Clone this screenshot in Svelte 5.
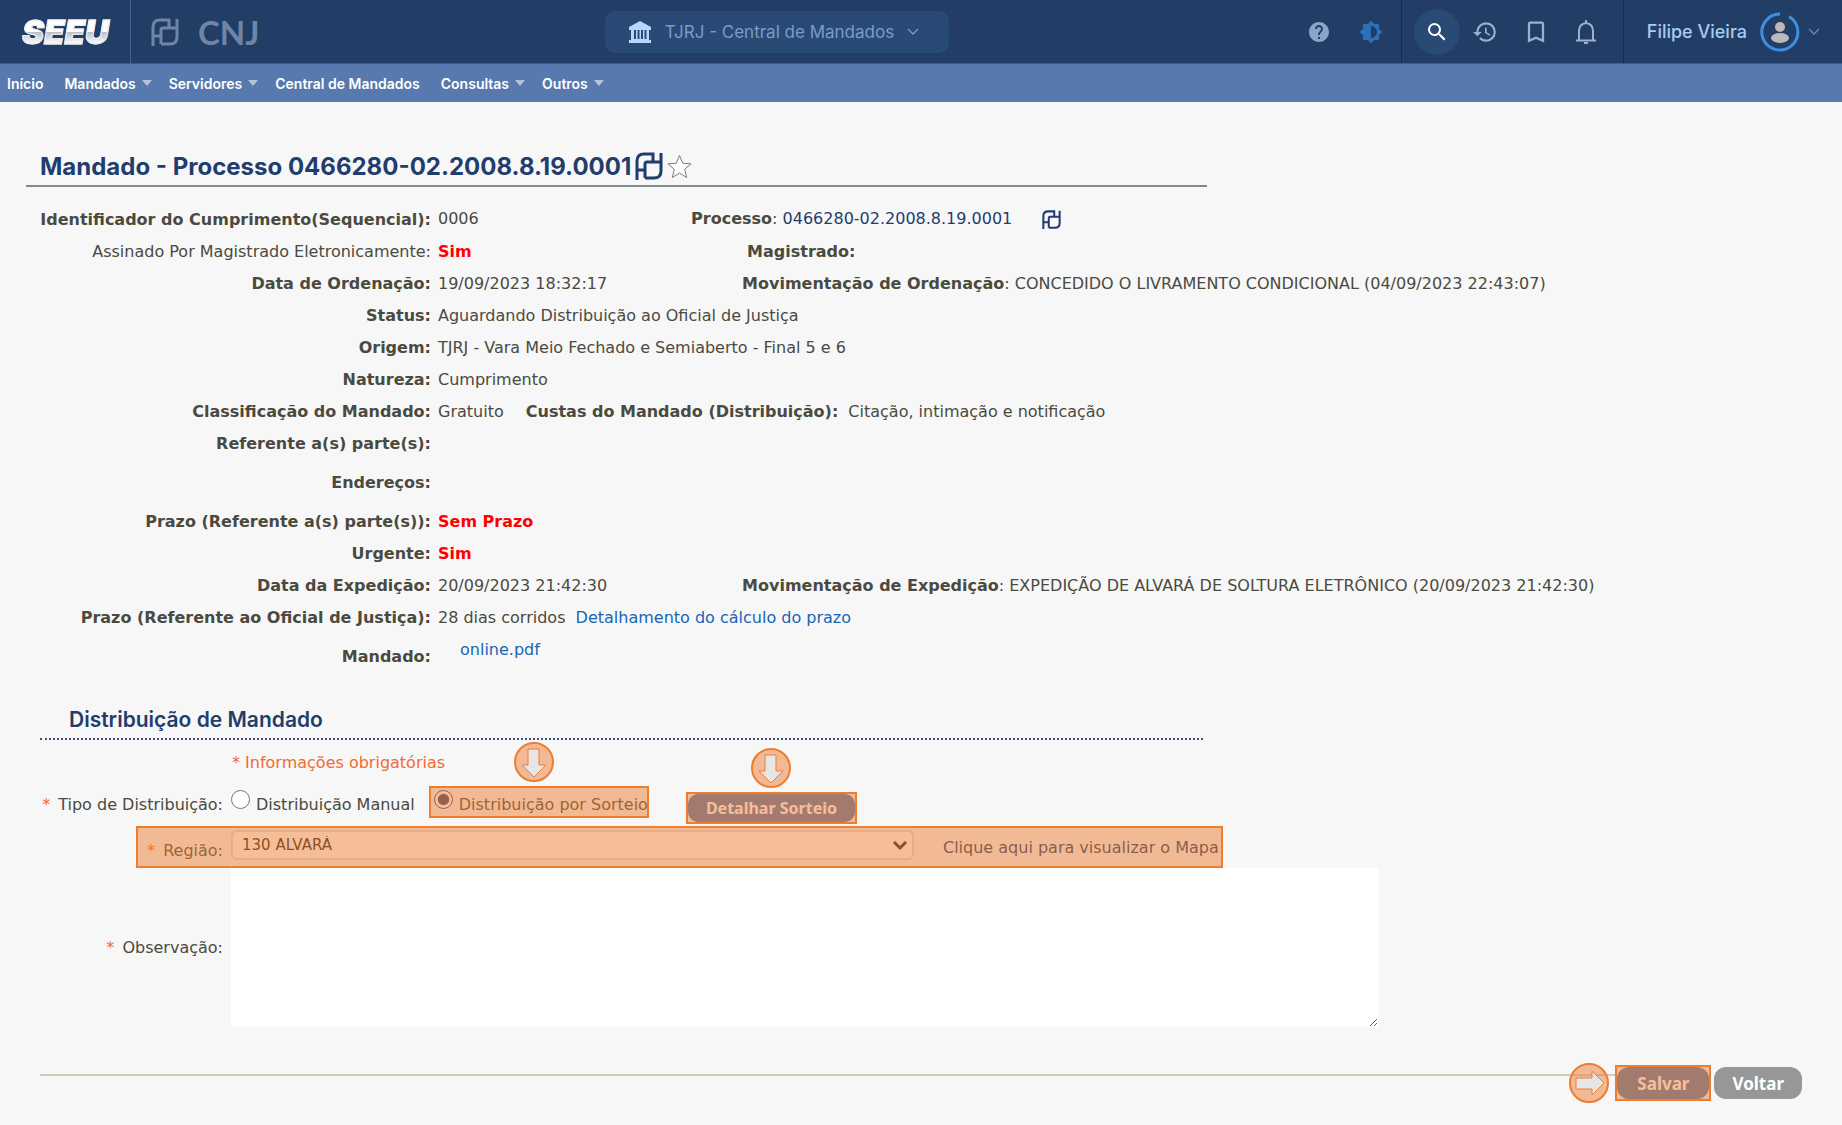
<script lang="ts">
	interface MenuItem {
		label: string;
		hasMenu?: boolean;
	}

	interface Detail {
		label: string;
		value?: string;
		light?: boolean;
		alert?: boolean;
		tall?: boolean;
	}

	const menu: MenuItem[] = [
		{ label: 'Início' },
		{ label: 'Mandados', hasMenu: true },
		{ label: 'Servidores', hasMenu: true },
		{ label: 'Central de Mandados' },
		{ label: 'Consultas', hasMenu: true },
		{ label: 'Outros', hasMenu: true }
	];

	const processo = '0466280-02.2008.8.19.0001';

	const details: Detail[] = [
		{ label: 'Identificador do Cumprimento(Sequencial):', value: '0006' },
		{ label: 'Assinado Por Magistrado Eletronicamente:', value: 'Sim', light: true, alert: true },
		{ label: 'Data de Ordenação:', value: '19/09/2023 18:32:17' },
		{ label: 'Status:', value: 'Aguardando Distribuição ao Oficial de Justiça' },
		{ label: 'Origem:', value: 'TJRJ - Vara Meio Fechado e Semiaberto - Final 5 e 6' },
		{ label: 'Natureza:', value: 'Cumprimento' },
		{ label: 'Classificação do Mandado:', value: 'Gratuito' },
		{ label: 'Referente a(s) parte(s):' },
		{ label: 'Endereços:', tall: true },
		{ label: 'Prazo (Referente a(s) parte(s)):', value: 'Sem Prazo', alert: true },
		{ label: 'Urgente:', value: 'Sim', alert: true },
		{ label: 'Data da Expedição:', value: '20/09/2023 21:42:30' },
		{ label: 'Prazo (Referente ao Oficial de Justiça):', value: '28 dias corridos' },
		{ label: 'Mandado:', tall: true }
	];

	let tipo = $state('sorteio');
	let regiao = $state('130');
	let observacao = $state('');
</script>

{#snippet pdpj(size: number)}
	<svg width={size} height={size} viewBox="0 0 28 28" fill="none" stroke="currentColor" stroke-width="3" aria-hidden="true">
		<path d="M2 28V9Q2 2 9 2H18V10M2 18H10M10 26V12Q10 10 12 10H26M10 26H19Q26 26 26 19V1" />
	</svg>
{/snippet}

{#snippet chevron()}
	<svg class="chevron" width="12" height="8" viewBox="0 0 12 8" fill="none" stroke="currentColor" stroke-width="1.3" aria-hidden="true">
		<path d="M1 1l5 5 5-5" />
	</svg>
{/snippet}

{#snippet arrow(right: boolean)}
	<svg width="40" height="40" viewBox="0 0 40 40" aria-hidden="true">
		<circle cx="20" cy="20" r="19" fill="#ed7d31" fill-opacity="0.5" stroke="#ed7d31" stroke-width="2" />
		<path
			d="M14 7H25V23H32L20 35 8 23H14Z"
			fill="#e7e6e6"
			stroke="#ed7d31"
			transform={right ? 'rotate(-90 20 20)' : undefined}
		/>
	</svg>
{/snippet}

<header class="topbar">
	<a class="logo" href="#inicio"><span>SEEU</span></a>
	<div class="partners">
		{@render pdpj(28)}
		<span class="cnj">CNJ</span>
	</div>

	<button type="button" class="unit">
		<svg width="24" height="24" viewBox="0 0 24 24" fill="#b5d8fa" aria-hidden="true">
			<path d="M12 1L1 7v3h2v10H1v3h22v-3h-2V10h2V7zM6 10h2v9H6zm3.500 0h2v9h-2zm3.500 0h2v9h-2zm3.500 0h2v9h-2z" fill-rule="evenodd" />
		</svg>
		<span>TJRJ - Central de Mandados</span>
		{@render chevron()}
	</button>

	<div class="tools">
		<button type="button" class="tool help" aria-label="Ajuda">
			<svg width="24" height="24" viewBox="0 0 24 24" fill="currentColor" aria-hidden="true">
				<path d="M12 2C6.480 2 2 6.480 2 12s4.480 10 10 10 10-4.480 10-10S17.520 2 12 2zm1 17h-2v-2h2v2zm2.070-7.750l-.9.920C13.450 12.900 13 13.500 13 15h-2v-.5c0-1.100.450-2.100 1.170-2.830l1.240-1.260c.370-.360.590-.860.590-1.410 0-1.100-.9-2-2-2s-2 .9-2 2H8c0-2.210 1.790-4 4-4s4 1.790 4 4c0 .880-.360 1.680-.930 2.250z" />
			</svg>
		</button>
		<button type="button" class="tool contrast" aria-label="Contraste">
			<svg width="24" height="24" viewBox="0 0 24 24" fill="currentColor" aria-hidden="true">
				<path d="M20 8.690V4h-4.690L12 .690 8.690 4H4v4.690L.690 12 4 15.310V20h4.690L12 23.310 15.310 20H20v-4.690L23.310 12 20 8.690zM12 18V6c3.310 0 6 2.690 6 6s-2.690 6-6 6z" />
			</svg>
		</button>
	</div>

	<div class="tools shortcuts">
		<button type="button" class="tool search" aria-label="Pesquisar">
			<svg width="24" height="24" viewBox="0 0 24 24" fill="currentColor" aria-hidden="true">
				<path d="M15.500 14h-.790l-.280-.270A6.470 6.470 0 0 0 16 9.500 6.500 6.500 0 1 0 9.500 16c1.610 0 3.090-.590 4.230-1.570l.270.280v.790l5 4.990L20.490 19l-4.990-5zm-6 0C7.010 14 5 11.990 5 9.500S7.010 5 9.500 5 14 7.010 14 9.500 11.990 14 9.500 14z" />
			</svg>
		</button>
		<button type="button" class="tool" aria-label="Histórico">
			<svg width="26" height="26" viewBox="0 0 24 24" fill="currentColor" aria-hidden="true">
				<path d="M13 3a9 9 0 0 0-9 9H1l3.890 3.890.070.140L9 12H6c0-3.870 3.130-7 7-7s7 3.130 7 7-3.130 7-7 7c-1.930 0-3.680-.790-4.940-2.060l-1.420 1.420A8.954 8.954 0 0 0 13 21a9 9 0 0 0 0-18zm-1 5v5l4.280 2.540.720-1.210-3.500-2.080V8H12z" />
			</svg>
		</button>
		<button type="button" class="tool" aria-label="Favoritos">
			<svg width="28" height="28" viewBox="0 0 24 24" fill="currentColor" aria-hidden="true">
				<path d="M17 3H7c-1.100 0-2 .9-2 2v16l7-3 7 3V5c0-1.100-.9-2-2-2zm0 15l-5-2.180L7 18V5h10v13z" />
			</svg>
		</button>
		<button type="button" class="tool" aria-label="Notificações">
			<svg width="24" height="26" viewBox="0 0 24 26" fill="none" stroke="currentColor" stroke-width="2" aria-hidden="true">
				<path d="M5 21V12Q5 5 12 4Q19 5 19 12V21M2 21.500H22M12 1V4" />
				<path d="M10 24h4" />
			</svg>
		</button>
	</div>

	<button type="button" class="user">
		<span>Filipe Vieira</span>
		<svg width="40" height="40" viewBox="0 0 40 40" aria-hidden="true">
			<path d="M20 2A18 18 0 1 0 29 4.500" fill="none" stroke="#3f8fe0" stroke-width="3" />
			<circle cx="20" cy="15" r="5" fill="#bdb9b6" />
			<ellipse cx="20" cy="26" rx="9" ry="5" fill="#bdb9b6" />
		</svg>
		{@render chevron()}
	</button>
</header>

<nav class="menu">
	{#each menu as item}
		<a href="#menu" class:has-menu={item.hasMenu}>{item.label}</a>
	{/each}
</nav>

<main>
	<h1>
		Mandado - Processo {processo}
		{@render pdpj(28)}
		<svg width="25" height="25" viewBox="0 0 25 25" fill="#fff" stroke="#7d7d74" stroke-linejoin="round" aria-hidden="true">
			<path d="M12.500 1.500l3.200 7.700 8.300.700-6.300 5.400 2 8.200-7.200-4.400-7.200 4.400 2-8.200L1 9.900l8.300-.700z" />
		</svg>
	</h1>

	<table class="details">
		<tbody>
			{#each details as row}
				<tr class:tall={row.tall}>
					<th scope="row" class:light={row.light}>{row.label}</th>
					<td class:alert={row.alert}>
						{#if row.value}<span class="value">{row.value}</span>{/if}
						{#if row.label.startsWith('Identificador')}
							<span class="extra processo"><b>Processo</b>: <a href="#processo">{processo}</a>{@render pdpj(19)}</span>
						{:else if row.label.startsWith('Assinado')}
							<span class="extra magistrado"><b>Magistrado:</b></span>
						{:else if row.label === 'Data de Ordenação:'}
							<span class="extra"><b>Movimentação de Ordenação</b>: CONCEDIDO O LIVRAMENTO CONDICIONAL (04/09/2023 22:43:07)</span>
						{:else if row.label.startsWith('Classificação')}
							<b class="custas">Custas do Mandado (Distribuição):</b>Citação, intimação e notificação
						{:else if row.label === 'Data da Expedição:'}
							<span class="extra"><b>Movimentação de Expedição</b>: EXPEDIÇÃO DE ALVARÁ DE SOLTURA ELETRÔNICO (20/09/2023 21:42:30)</span>
						{:else if row.value === '28 dias corridos'}
							<a class="link calculo" href="#prazo">Detalhamento do cálculo do prazo</a>
						{:else if row.label === 'Mandado:'}
							<a class="link arquivo" href="#pdf">online.pdf</a>
						{/if}
					</td>
				</tr>
			{/each}
		</tbody>
	</table>

	<h2>Distribuição de Mandado</h2>

	<form onsubmit={(e) => e.preventDefault()}>
		<p class="required-note">* Informações obrigatórias</p>

		<div class="row tipo" role="radiogroup" aria-labelledby="tipo-label">
			<span class="label" id="tipo-label"><i>*</i> Tipo de Distribuição:</span>
			<div class="field">
				<label class="option"><input type="radio" name="tipo" value="manual" bind:group={tipo} /> Distribuição Manual</label>
				<label class="option highlight">
					<input type="radio" name="tipo" value="sorteio" bind:group={tipo} /> Distribuição por Sorteio
					<span class="pointer">{@render arrow(false)}</span>
				</label>
				<div class="highlight detalhar">
					<button type="button" class="btn">Detalhar Sorteio</button>
					<span class="pointer">{@render arrow(false)}</span>
				</div>
			</div>
		</div>

		<div class="row regiao highlight">
			<label class="label" for="regiao"><i>*</i> Região:</label>
			<div class="field">
				<div class="select">
					<select id="regiao" bind:value={regiao}>
						<option value="130">130 ALVARÁ</option>
					</select>
					<svg width="14" height="10" viewBox="0 0 14 10" fill="none" stroke="#222" stroke-width="3" aria-hidden="true">
						<path d="M1 1l6 6 6-6" />
					</svg>
				</div>
				<a class="mapa" href="#mapa">Clique aqui para visualizar o Mapa</a>
			</div>
		</div>

		<div class="row observacao">
			<label class="label" for="observacao"><i>*</i> Observação:</label>
			<textarea id="observacao" bind:value={observacao}></textarea>
		</div>

		<div class="actions">
			<hr />
			<div class="highlight salvar">
				<button type="submit" class="btn">Salvar</button>
				<span class="pointer left">{@render arrow(true)}</span>
			</div>
			<button type="button" class="btn secondary">Voltar</button>
		</div>
	</form>
</main>

<style>
	:global(body) {
		background: #f7f7f7;
		color: #4a4a40;
		font-family: 'DejaVu Sans', Verdana, sans-serif;
		font-size: 16px;
	}

	a {
		color: inherit;
		text-decoration: none;
	}

	button {
		font-family: inherit;
		border: 0;
		cursor: pointer;
	}

	svg {
		flex-shrink: 0;
	}

	.topbar {
		display: flex;
		align-items: center;
		height: 63px;
		background: #223d66;
		border-bottom: 1px solid #3c5a8a;
		font-family: Inter, sans-serif;
	}

	.logo {
		display: flex;
		align-items: center;
		align-self: stretch;
		box-sizing: border-box;
		width: 131px;
		padding-left: 20px;
		border-right: 1px solid #4a6288;
	}

	.logo span {
		padding: 0 4px 0 2px;
		background: linear-gradient(#fff 50%, #b9c0ca 51%, #f4f4f4 75%);
		background-clip: text;
		color: transparent;
		font: italic 900 33px Inter, sans-serif;
		-webkit-text-stroke: 1px #eee;
	}

	.partners {
		display: flex;
		align-items: center;
		gap: 19px;
		flex: 1;
		padding: 0 20px;
		color: #7085a5;
	}

	.cnj {
		font: bold 33px/36px Lato, sans-serif;
	}

	.unit {
		display: flex;
		align-items: center;
		gap: 13px;
		height: 42px;
		padding: 0 30px 0 23px;
		border-radius: 10px;
		background: #294a75;
		color: #7b9cc7;
		font-size: 17px;
	}

	.tools {
		display: flex;
		align-items: center;
		justify-content: flex-end;
		gap: 28px;
		flex: 1;
		align-self: stretch;
		padding-right: 18px;
		border-right: 1px solid #182c4c;
	}

	.tools.shortcuts {
		flex: none;
		gap: 24px;
		padding: 0 25px 0 12px;
	}

	.tool {
		display: flex;
		padding: 0;
		background: none;
		color: #9fb0cc;
	}

	.help {
		color: #8aa5c8;
	}

	.contrast {
		color: #2e70b8;
	}

	.search {
		align-items: center;
		justify-content: center;
		width: 46px;
		height: 46px;
		margin-right: -12px;
		border-radius: 50%;
		background: #294a75;
		color: #fff;
	}

	.user {
		display: flex;
		align-items: center;
		padding: 0 22px 0 23px;
		background: none;
		color: #a9cbf0;
		font-size: 18px;
		font-weight: 500;
	}

	.user > svg {
		margin-left: 13px;
	}

	.user .chevron,
	.user :global(.chevron) {
		margin-left: 8px;
		color: #6f89af;
	}

	.menu {
		display: flex;
		align-items: center;
		gap: 21px;
		height: 38px;
		padding-left: 7px;
		background: #5879ad;
		color: #fff;
		font: 600 14px Inter, sans-serif;
	}

	.has-menu::after {
		content: '';
		display: inline-block;
		margin: 0 -4px 3px 6px;
		border: 5px solid transparent;
		border-top: 6px solid #b4c3dc;
		border-bottom: 0;
	}

	main {
		padding: 45px 40px 24px;
	}

	h1 {
		display: flex;
		align-items: center;
		gap: 4px;
		box-sizing: border-box;
		width: 67%;
		height: 40px;
		margin: 0 0 16px -14px;
		padding-left: 14px;
		border-bottom: 2px solid #7b8b8f;
		color: #1f3d6d;
		font: 700 24px Inter, sans-serif;
		white-space: nowrap;
	}

	.details {
		border-collapse: collapse;
	}

	.details tr {
		height: 32px;
	}

	.details .tall {
		height: 46px;
	}

	.details th,
	.details td {
		padding: 0;
		white-space: nowrap;
	}

	.details th {
		width: 391px;
		text-align: right;
	}

	.details .light {
		font-weight: normal;
	}

	.details td {
		padding-left: 7px;
	}

	.value {
		display: inline-block;
	}

	.alert .value {
		color: #f00;
		font-weight: bold;
	}

	td:has(.extra) .value {
		width: 299px;
	}

	td:has(.processo) .value {
		width: 248px;
	}

	.magistrado {
		padding-left: 5px;
	}

	.processo a,
	.processo svg {
		color: #1f3d6d;
	}

	.processo svg {
		margin-left: 30px;
		vertical-align: middle;
	}

	.custas {
		margin: 0 10px 0 17px;
	}

	.link {
		color: #1765b5;
	}

	.calculo {
		margin-left: 5px;
	}

	.details .tall td {
		padding-bottom: 14px;
	}

	.arquivo {
		margin-left: 22px;
	}

	h2 {
		width: 1134px;
		margin: 29px 0 0;
		padding: 0 0 6px 29px;
		border-bottom: 2px dotted #3d5580;
		color: #1f3d6d;
		font: 600 21px/24px Inter, sans-serif;
	}

	.required-note {
		margin: 0;
		padding: 13px 0 0 192px;
		color: #f26a30;
		line-height: 20px;
	}

	.row {
		display: flex;
		align-items: center;
		gap: 8px;
	}

	.label {
		width: 183px;
		text-align: right;
		white-space: nowrap;
	}

	.label i {
		margin-right: 3px;
		color: #f26a30;
		font-style: normal;
	}

	.field {
		display: flex;
		align-items: center;
	}

	.tipo {
		padding: 13px 0 2px;
		line-height: 38px;
	}

	.tipo .field {
		align-items: flex-start;
	}

	.option {
		display: flex;
		align-items: flex-start;
		gap: 6px;
		height: 32px;
		white-space: nowrap;
	}

	.option input {
		width: 19px;
		height: 19px;
		margin: 4px 0 0;
		accent-color: #446;
	}

	.highlight {
		position: relative;
	}

	.highlight::after {
		content: '';
		position: absolute;
		inset: 0;
		border: 2px solid #ed7d31;
		background: #ed7d3180;
		pointer-events: none;
	}

	.option.highlight {
		margin-left: 14px;
		padding: 0 1px 0 5px;
	}

	.pointer {
		position: absolute;
		left: 50%;
		bottom: 100%;
		display: flex;
		margin: 0 0 4px -20px;
	}

	.option .pointer {
		left: 48%;
	}

	.pointer.left {
		right: 100%;
		bottom: auto;
		left: auto;
		margin: 0 6px 0 0;
	}

	.detalhar {
		margin: 6px 0 0 37px;
	}

	.highlight.detalhar,
	.highlight.salvar {
		display: flex;
		align-items: center;
		padding: 2px;
	}

	.btn {
		height: 28px;
		padding: 0 18px;
		border-radius: 10px;
		background: #5779ab;
		color: #fff;
		font: bold 16px 'Noto Sans', sans-serif;
	}

	.regiao {
		width: 1087px;
		height: 42px;
		margin-left: 96px;
	}

	.regiao .label {
		width: 87px;
		padding-top: 6px;
	}

	.select {
		position: relative;
		margin-bottom: 4px;
	}

	.select svg {
		position: absolute;
		top: 11px;
		right: 7px;
		pointer-events: none;
	}

	select {
		display: block;
		width: 683px;
		height: 30px;
		padding: 0 9px;
		border: 2px solid #ddd;
		border-radius: 6px;
		background: #fff;
		color: #222;
		font: 15px 'DejaVu Sans', sans-serif;
		appearance: none;
	}

	.mapa {
		margin-left: 29px;
		color: #1f3d6d;
		white-space: nowrap;
	}

	textarea {
		box-sizing: border-box;
		width: 1147px;
		height: 159px;
		border: 0;
		background: #fff;
	}

	.actions {
		display: flex;
		align-items: center;
		gap: 3px;
		margin-top: 38px;
	}

	hr {
		flex: 1;
		margin: 0 -3px 16px 0;
		border: 0;
		border-top: 2px solid #d3cdb8;
	}

	.salvar .btn,
	.secondary {
		height: 32px;
		border-radius: 12px;
		font-size: 17px;
	}

	.salvar .btn {
		padding: 0 20px;
	}

	.btn.secondary {
		background: #979797;
	}
</style>
